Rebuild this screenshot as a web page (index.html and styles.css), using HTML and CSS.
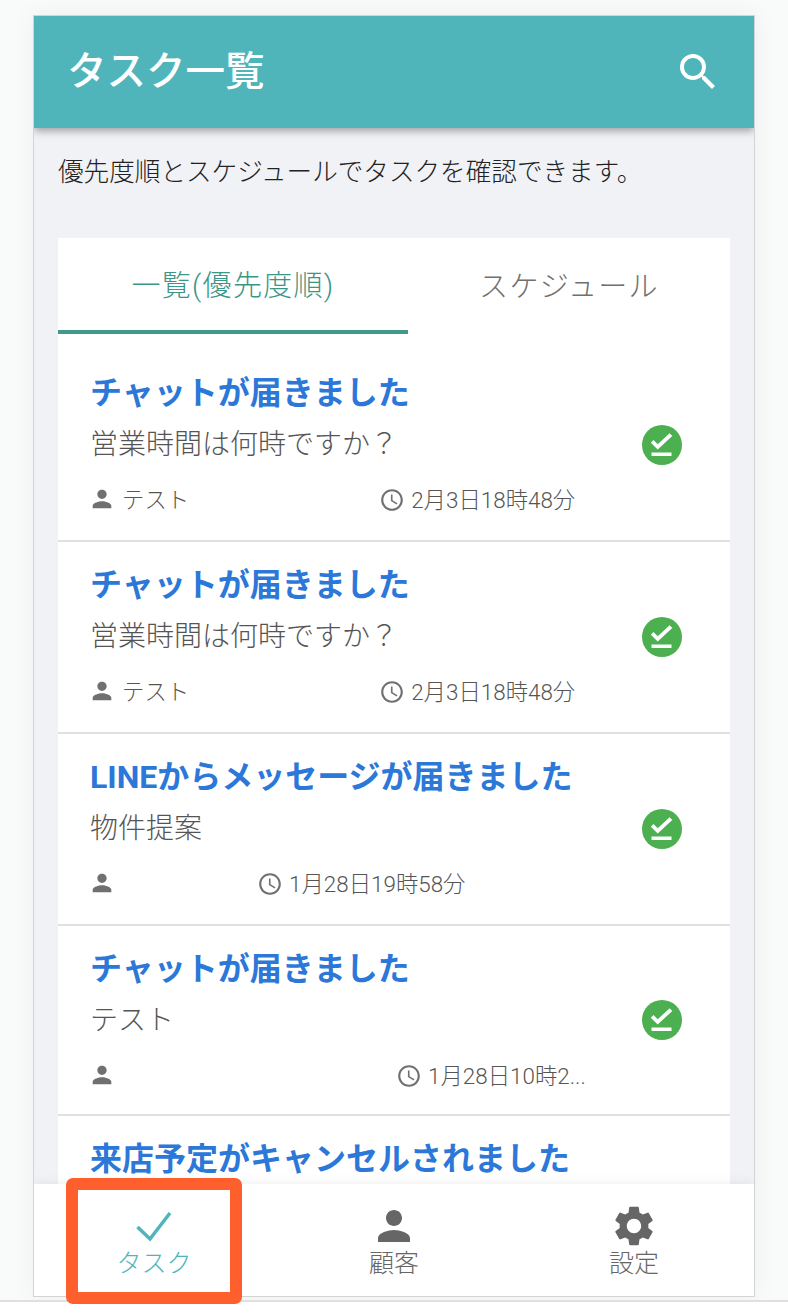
FILE: index.html
```html
<!DOCTYPE html>
<html lang="ja">
<head>
<meta charset="utf-8">
<title>タスク一覧</title>
<link rel="stylesheet" href="styles.css">
</head>
<body>
<div class="page">
  <div class="frame">
    <header class="appbar">
      <h1 class="appbar-title">タスク一覧</h1>
      <svg class="appbar-search" viewBox="0 0 24 24"><path d="M15.5 14h-.79l-.28-.27A6.47 6.47 0 0 0 16 9.5 6.5 6.5 0 1 0 9.5 16c1.61 0 3.09-.59 4.23-1.57l.27.28v.79l5 4.99L20.49 19l-4.99-5zm-6 0C7.01 14 5 11.99 5 9.5S7.01 5 9.5 5 14 7.01 14 9.5 11.99 14 9.5 14z"/></svg>
    </header>
    <main class="content">
      <p class="lead">優先度順とスケジュールでタスクを確認できます。</p>
      <section class="card">
        <div class="tabs">
          <div class="tab tab-active">一覧(優先度順)</div>
          <div class="tab">スケジュール</div>
        </div>
        <ul class="list">
          <li class="item">
            <div class="item-main">
              <div class="item-title">チャットが届きました</div>
              <div class="item-body">営業時間は何時ですか？</div>
              <div class="meta">
                <svg class="meta-person" viewBox="0 0 24 24"><path d="M12 12c2.21 0 4-1.79 4-4s-1.79-4-4-4-4 1.79-4 4 1.79 4 4 4zm0 2c-2.67 0-8 1.34-8 4v2h16v-2c0-2.66-5.33-4-8-4z"/></svg>
                <span class="meta-name">テスト</span>
                <svg class="meta-clock clock-a" viewBox="0 0 24 24"><path d="M11.99 2C6.47 2 2 6.48 2 12s4.47 10 9.99 10C17.52 22 22 17.52 22 12S17.52 2 11.99 2zM12 20c-4.42 0-8-3.58-8-8s3.58-8 8-8 8 3.58 8 8-3.58 8-8 8zm.5-13H11v6l5.25 3.15.75-1.23-4.5-2.67z"/></svg>
                <span class="meta-time">2月3日18時48分</span>
              </div>
            </div>
            <svg class="status" viewBox="0 0 40 40"><circle cx="20" cy="20" r="20"/><path class="status-mark" d="M9.500 27.500h20v3.500h-20zM15.700 24.600L8.800 17.800l2.700-2.700 4.200 4.200L27.600 8.200l2.700 2.700z"/></svg>
          </li>
          <li class="item">
            <div class="item-main">
              <div class="item-title">チャットが届きました</div>
              <div class="item-body">営業時間は何時ですか？</div>
              <div class="meta">
                <svg class="meta-person" viewBox="0 0 24 24"><path d="M12 12c2.21 0 4-1.79 4-4s-1.79-4-4-4-4 1.79-4 4 1.79 4 4 4zm0 2c-2.67 0-8 1.34-8 4v2h16v-2c0-2.66-5.33-4-8-4z"/></svg>
                <span class="meta-name">テスト</span>
                <svg class="meta-clock clock-a" viewBox="0 0 24 24"><path d="M11.99 2C6.47 2 2 6.48 2 12s4.47 10 9.99 10C17.52 22 22 17.52 22 12S17.52 2 11.99 2zM12 20c-4.42 0-8-3.58-8-8s3.58-8 8-8 8 3.58 8 8-3.58 8-8 8zm.5-13H11v6l5.25 3.15.75-1.23-4.5-2.67z"/></svg>
                <span class="meta-time">2月3日18時48分</span>
              </div>
            </div>
            <svg class="status" viewBox="0 0 40 40"><circle cx="20" cy="20" r="20"/><path class="status-mark" d="M9.500 27.500h20v3.500h-20zM15.700 24.600L8.800 17.800l2.700-2.700 4.200 4.200L27.600 8.200l2.700 2.700z"/></svg>
          </li>
          <li class="item">
            <div class="item-main">
              <div class="item-title">LINEからメッセージが届きました</div>
              <div class="item-body">物件提案</div>
              <div class="meta">
                <svg class="meta-person" viewBox="0 0 24 24"><path d="M12 12c2.21 0 4-1.79 4-4s-1.79-4-4-4-4 1.79-4 4 1.79 4 4 4zm0 2c-2.67 0-8 1.34-8 4v2h16v-2c0-2.66-5.33-4-8-4z"/></svg>
                <svg class="meta-clock clock-b" viewBox="0 0 24 24"><path d="M11.99 2C6.47 2 2 6.48 2 12s4.47 10 9.99 10C17.52 22 22 17.52 22 12S17.52 2 11.99 2zM12 20c-4.42 0-8-3.58-8-8s3.58-8 8-8 8 3.58 8 8-3.58 8-8 8zm.5-13H11v6l5.25 3.15.75-1.23-4.5-2.67z"/></svg>
                <span class="meta-time">1月28日19時58分</span>
              </div>
            </div>
            <svg class="status" viewBox="0 0 40 40"><circle cx="20" cy="20" r="20"/><path class="status-mark" d="M9.500 27.500h20v3.500h-20zM15.700 24.600L8.800 17.800l2.700-2.700 4.200 4.200L27.600 8.200l2.700 2.700z"/></svg>
          </li>
          <li class="item item-short">
            <div class="item-main">
              <div class="item-title">チャットが届きました</div>
              <div class="item-body">テスト</div>
              <div class="meta">
                <svg class="meta-person" viewBox="0 0 24 24"><path d="M12 12c2.21 0 4-1.79 4-4s-1.79-4-4-4-4 1.79-4 4 1.79 4 4 4zm0 2c-2.67 0-8 1.34-8 4v2h16v-2c0-2.66-5.33-4-8-4z"/></svg>
                <svg class="meta-clock clock-c" viewBox="0 0 24 24"><path d="M11.99 2C6.47 2 2 6.48 2 12s4.47 10 9.99 10C17.52 22 22 17.52 22 12S17.52 2 11.99 2zM12 20c-4.42 0-8-3.58-8-8s3.58-8 8-8 8 3.58 8 8-3.58 8-8 8zm.5-13H11v6l5.25 3.15.75-1.23-4.5-2.67z"/></svg>
                <span class="meta-time">1月28日10時2...</span>
              </div>
            </div>
            <svg class="status" viewBox="0 0 40 40"><circle cx="20" cy="20" r="20"/><path class="status-mark" d="M9.500 27.500h20v3.500h-20zM15.700 24.600L8.800 17.800l2.700-2.700 4.200 4.200L27.600 8.200l2.700 2.700z"/></svg>
          </li>
          <li class="item">
            <div class="item-main">
              <div class="item-title">来店予定がキャンセルされました</div>
            </div>
          </li>
        </ul>
      </section>
    </main>
    <nav class="bottomnav">
      <div class="nav-item nav-item-active">
        <svg class="nav-icon" viewBox="0 0 48 48"><path class="nav-check" d="M7.500 25L20 37 40 11"/></svg>
        <span class="nav-label">タスク</span>
      </div>
      <div class="nav-item">
        <svg class="nav-icon" viewBox="0 0 24 24"><path d="M12 12c2.210 0 4-1.790 4-4s-1.790-4-4-4-4 1.790-4 4 1.790 4 4 4zm0 2c-2.670 0-8 1.340-8 4v2h16v-2c0-2.660-5.330-4-8-4z"/></svg>
        <span class="nav-label">顧客</span>
      </div>
      <div class="nav-item">
        <svg class="nav-icon" viewBox="0 0 24 24"><path d="M19.140 12.940c.04-.3.060-.61.060-.94 0-.32-.02-.64-.07-.94l2.030-1.580a.49.490 0 0 0 .12-.61l-1.920-3.320a.488.488 0 0 0-.59-.22l-2.390.96c-.5-.38-1.030-.7-1.620-.94l-.36-2.540a.484.484 0 0 0-.48-.41h-3.840c-.24 0-.43.17-.47.41l-.36 2.540c-.59.24-1.130.57-1.620.94l-2.390-.96c-.22-.08-.47 0-.59.22L2.740 8.870c-.12.21-.08.47.12.61l2.030 1.580c-.05.3-.09.63-.09.94s.02.64.07.94l-2.030 1.580a.49.490 0 0 0-.12.61l1.920 3.320c.12.22.37.29.59.22l2.390-.96c.5.38 1.030.7 1.620.94l.36 2.540c.05.24.24.41.48.41h3.840c.24 0 .44-.17.47-.41l.36-2.540c.59-.24 1.130-.56 1.620-.94l2.390.96c.22.08.47 0 .59-.22l1.920-3.320c.12-.22.07-.47-.12-.61l-2.010-1.580zM12 15.600c-1.980 0-3.600-1.620-3.600-3.600s1.620-3.600 3.600-3.600 3.600 1.620 3.600 3.600-1.620 3.600-3.600 3.600z"/></svg>
        <span class="nav-label">設定</span>
      </div>
    </nav>
  </div>
</div>
<div class="highlight"></div>
</body>
</html>
```
FILE: styles.css
```css
* { box-sizing: border-box; }
html, body { margin: 0; padding: 0; background: #fff; }
body {
  position: relative;
  font-family: Roboto, "Noto Sans CJK JP", sans-serif;
  width: 788px;
  height: 1314px;
  overflow: hidden;
}
.page {
  height: 1302px;
  padding: 15px 33px 0;
  background: #f9fafa;
  border-bottom: 2px solid #e0e0e0;
  overflow: hidden;
}
.frame {
  width: 722px;
  height: 1282px;
  border: 1px solid #d2d4d6;
  background: #f0f2f6;
  display: flex;
  flex-direction: column;
  overflow: hidden;
  box-shadow: 0 0 24px rgba(0, 0, 0, .05);
}
.appbar {
  flex: none;
  position: relative;
  z-index: 2;
  height: 112px;
  background: #50b5bb;
  box-shadow: 0 3px 8px rgba(0, 0, 0, .35);
  display: flex;
  align-items: center;
  justify-content: space-between;
  padding: 0 32px 0 33px;
}
.appbar-title {
  margin: 0;
  color: #fff;
  font-size: 39.500px;
  font-weight: 500;
  line-height: 1;
}
.appbar-search { width: 48px; height: 48px; fill: #fff; }
.content { flex: 1 1 0; min-height: 0; padding: 0 24px; overflow: hidden; }
.lead {
  margin: 0;
  height: 110px;
  padding-top: 27px;
  font-size: 25.600px;
  line-height: 34px;
  font-weight: 300;
  color: #222;
}
.card { background: #fff; }
.tabs { display: grid; grid-template-columns: 350px 322px; height: 96px; }
.tab {
  display: flex;
  align-items: center;
  justify-content: center;
  padding-bottom: 5px;
  font-size: 29px;
  font-weight: 300;
  letter-spacing: 1.300px;
  color: #707070;
}
.tab-active { color: #3a9686; border-bottom: 4px solid #409a8a; padding-bottom: 3px; }
.list { list-style: none; margin: 0; padding: 16px 0 0; }
.item {
  height: 192px;
  padding: 0 48px 0 32px;
  border-bottom: 2px solid #e0e0e0;
  display: flex;
  justify-content: space-between;
  align-items: center;
}
.item-short { height: 190px; }
.item-main { align-self: flex-start; min-width: 0; }
.item-title {
  padding-top: 23px;
  font-size: 32px;
  line-height: 40px;
  font-weight: 700;
  color: #2b78d8;
  white-space: nowrap;
}
.item-body {
  margin-top: 12px;
  font-size: 28px;
  line-height: 40px;
  font-weight: 300;
  color: #555;
}
.meta {
  margin-top: 19px;
  height: 28px;
  display: flex;
  align-items: center;
  font-size: 22.400px;
  font-weight: 300;
  color: #555;
}
.meta-person { width: 28px; height: 28px; fill: #707070; flex: none; margin-top: 2px; margin-left: -2px; }
.meta-name { margin-left: 6px; }
.meta-clock { width: 26px; height: 26px; fill: #707070; flex: none; margin-top: 4px; margin-right: 6px; }
.clock-a { margin-left: 190px; }
.clock-b { margin-left: 141px; }
.clock-c { margin-left: 280px; }
.status { width: 40px; height: 40px; flex: none; fill: #4caf50; }
.status-mark { fill: #fff; }
.bottomnav {
  flex: none;
  position: relative;
  z-index: 2;
  height: 112px;
  background: #fff;
  display: grid;
  grid-template-columns: repeat(3, 240px);
  box-shadow: 0 -2px 10px rgba(0, 0, 0, .06);
}
.nav-item {
  display: flex;
  flex-direction: column;
  align-items: center;
  padding-top: 18px;
  color: #666;
}
.nav-item-active { color: #50b5bb; }
.nav-icon { width: 48px; height: 48px; fill: #666; flex: none; }
.nav-check { fill: none; stroke: #50b5bb; stroke-width: 3.500px; }
.nav-label { font-size: 25px; line-height: 28px; font-weight: 300; }
.highlight {
  position: absolute;
  z-index: 5;
  left: 66px;
  top: 1178px;
  width: 176px;
  height: 126px;
  border: 12px solid #ff5f2c;
  border-radius: 7px;
}
```
